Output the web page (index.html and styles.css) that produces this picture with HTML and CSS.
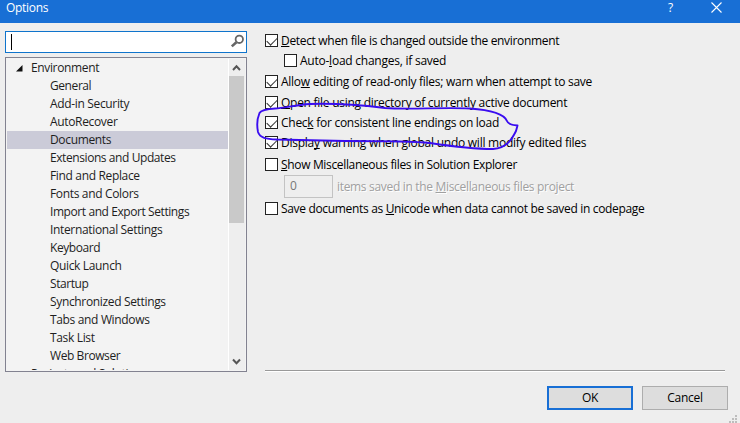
FILE: index.html
```html
<!DOCTYPE html>
<html lang="en">
<head>
<meta charset="utf-8">
<title>Options</title>
<link rel="stylesheet" href="styles.css">
</head>
<body>
<div class="dialog">
  <header class="titlebar">
    <span class="title">Options</span>
    <span class="help">?</span>
    <svg class="close" width="11" height="11" viewBox="0 0 11 11"><path d="M.5.5l10 10M10.5.5l-10 10" fill="none" stroke="#fff" stroke-width="1.1"/></svg>
  </header>
  <div class="content">
    <aside class="sidebar">
      <div class="search">
        <span class="caret"></span>
        <svg width="14" height="14" viewBox="0 0 14 14"><circle cx="9.3" cy="5.3" r="3.7" fill="none" stroke="#666" stroke-width="1.8"/><path d="M6.4 8.2L1.8 12.4" stroke="#666" stroke-width="2.6"/></svg>
      </div>
      <div class="tree">
        <ul class="nodes">
          <li class="parent"><svg class="arrow" width="7" height="7" viewBox="0 0 7 7"><path d="M6.5 0v6.5H0z" fill="#111"/></svg><span>Environment</span></li>
          <li class="tight">General</li>
          <li>Add-in Security</li>
          <li>AutoRecover</li>
          <li class="selected">Documents</li>
          <li class="tight">Extensions and Updates</li>
          <li>Find and Replace</li>
          <li>Fonts and Colors</li>
          <li class="tight">Import and Export Settings</li>
          <li>International Settings</li>
          <li class="tight">Keyboard</li>
          <li>Quick Launch</li>
          <li class="tight">Startup</li>
          <li>Synchronized Settings</li>
          <li>Tabs and Windows</li>
          <li>Task List</li>
          <li class="tight">Web Browser</li>
          <li class="parent next">Projects and Solutions</li>
        </ul>
        <div class="scrollbar">
          <svg width="15" height="17" viewBox="0 0 15 17"><path d="M4 11l3.5-3.7L11 11" fill="none" stroke="#555" stroke-width="2"/></svg>
          <div class="thumb"></div>
          <svg class="down" width="15" height="17" viewBox="0 0 15 17"><path d="M4 6.5l3.5 3.7L11 6.5" fill="none" stroke="#555" stroke-width="2"/></svg>
        </div>
      </div>
    </aside>
    <main class="page">
      <div class="option o1"><i class="box on"></i><span><u>D</u>etect when file is changed outside the environment</span></div>
      <div class="option o2"><i class="box"></i><span>Auto-<u>l</u>oad changes, if saved</span></div>
      <div class="option o3"><i class="box on"></i><span>Allo<u>w</u> editing of read-only files; warn when attempt to save</span></div>
      <div class="option o4"><i class="box on"></i><span><u>O</u>pen file using directory of currently active document</span></div>
      <div class="option o5"><i class="box on"></i><span>Chec<u>k</u> for consistent line endings on load</span></div>
      <div class="option o6"><i class="box on"></i><span>Displa<u>y</u> warning when global undo will modify edited files</span></div>
      <div class="option o7"><i class="box"></i><span><u>S</u>how Miscellaneous files in Solution Explorer</span></div>
      <div class="count"><span class="field">0</span><span class="label">items saved in the <u>M</u>iscellaneous files project</span></div>
      <div class="option o8"><i class="box"></i><span>Save documents as <u>U</u>nicode when data cannot be saved in codepage</span></div>
      <div class="rule"></div>
    </main>
  </div>
  <footer class="actions">
    <button class="button primary">OK</button>
    <button class="button">Cancel</button>
  </footer>
  <svg class="grip" width="8" height="8" viewBox="0 0 8 8"><path d="M6 0h2v2H6zM3 3h2v2H3zM6 3h2v2H6zM0 6h2v2H0zM3 6h2v2H3zM6 6h2v2H6z" fill="#bdbdbd"/></svg>
  <svg class="markup" width="740" height="423" viewBox="0 0 740 423"><path d="M275 108.500C267 109 261 110 259.500 113C257 119 257 127 258 132C260 138 266 139 277 139.500L345 141C385 141 410 141 430 143C450 146 475 149 493 149C507 148 512 139 516 131L517.500 125.500C511 125 508 124 507 121C504 114 492 110 470 108.500C440 107 410 110 385 108C360 105 340 103 310 104C295 105 285 108 275 108.500" fill="none" stroke="#3a0cf0" stroke-width="1.9" stroke-linecap="round" stroke-linejoin="round"/></svg>
</div>
</body>
</html>
```
FILE: styles.css
```css
* { box-sizing: border-box; }
body { margin: 0; }
.dialog {
  position: relative;
  width: 740px;
  height: 423px;
  overflow: hidden;
  background: #eeeeee;
  color: #1e1e1e;
  font: 12px/18px "Open Sans", "Noto Sans", sans-serif;
  letter-spacing: -0.3px;
  white-space: nowrap;
}
.titlebar {
  display: flex;
  height: 23px;
  padding: 0 18px 0 6px;
  background: #186fd5;
  color: #fff;
  line-height: 16px;
}
.title { flex: 1; }
.help { width: 6px; margin-right: 37px; line-height: 15px; }
.close { margin-top: 2px; }
.content { display: flex; padding: 8px 15px 0 5px; }
.sidebar { width: 242px; }
.search {
  display: flex;
  justify-content: space-between;
  height: 22px;
  padding: 2px 2px 0 5px;
  border: 1px solid #0f74cc;
  background: #fff;
}
.caret { width: 1px; height: 16px; background: #000; }
.tree {
  display: flex;
  height: 315px;
  margin-top: 4px;
  padding: 1px;
  border: 1px solid #828290;
  background: #f3f3f3;
}
.nodes {
  flex: 1;
  margin: 0;
  padding: 0;
  overflow: hidden;
  list-style: none;
}
.nodes li { height: 18px; padding-left: 43px; letter-spacing: -0.34px; }
.nodes .tight { letter-spacing: -0.42px; }
.nodes .parent { display: flex; padding-left: 9px; letter-spacing: -0.36px; }
.nodes .next { padding-left: 24px; }
.arrow { margin: 6px 8px 0 0; }
.nodes .selected { background: #cbcbd8; }
.scrollbar {
  display: flex;
  flex-direction: column;
  width: 17px;
  padding-right: 1px;
  border-left: 1px solid #fff;
  background: #eeeeee;
}
.thumb { height: 147px; background: #c9c9c9; }
.down { margin-top: auto; }
.page { flex: 1; padding: 3px 0 0 18px; color: #000; }
.option {
  display: flex;
  align-items: center;
  gap: 3px;
  height: 13px;
}
.o1 { letter-spacing: -0.32px; }
.o2 { margin: 7px 0 0 19px; letter-spacing: -0.24px; }
.o3, .o4 { margin-top: 8px; letter-spacing: -0.27px; }
.o5, .o6 { margin-top: 7px; }
.o5 { letter-spacing: -0.27px; }
.o6 { letter-spacing: -0.25px; }
.o7 { margin-top: 9px; letter-spacing: -0.34px; }
.o8 { margin-top: 4px; letter-spacing: -0.33px; }
u { text-underline-offset: 1px; text-decoration-thickness: 1px; text-decoration-skip-ink: none; }
.box { width: 13px; height: 13px; border: 1px solid #222; background: #fff; }
.on::after {
  content: "";
  display: block;
  width: 9px;
  height: 5px;
  margin: 2px 0 0 1px;
  border: solid #333;
  border-width: 0 0 1px 1px;
  transform: rotate(-45deg);
}
.count { display: flex; height: 23px; margin: 4px 0 0 19px; color: #a0a0a0; }
.field { width: 49px; padding: 1px 5px; border: 1px solid #c3c3c3; color: #777; }
.label { margin: 3px 0 0 4px; letter-spacing: -0.32px; text-shadow: 1px 1px #fff; }
.rule { height: 2px; margin-top: 155px; border-top: 1px solid #999; background: #fff; }
.actions { display: flex; justify-content: flex-end; gap: 9px; padding: 14px 12px 0 0; }
.button {
  width: 86px;
  height: 24px;
  padding: 0;
  border: 1px solid #adadad;
  background: #dddddd;
  color: #000;
  font: inherit;
  letter-spacing: inherit;
}
.primary { border: 2px solid #186fd5; }
.grip { position: absolute; right: 3px; bottom: 0; }
.markup { position: absolute; inset: 0; pointer-events: none; }
```
